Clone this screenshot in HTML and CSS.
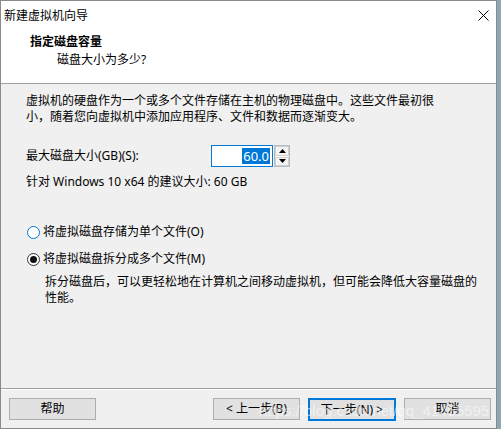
FILE: index.html
```html
<!DOCTYPE html>
<html lang="zh-CN">
<head>
<meta charset="utf-8">
<title>新建虚拟机向导</title>
<link rel="stylesheet" href="styles.css">
</head>
<body>
<div class="window">
  <div class="titlebar">
    <span class="title">新建虚拟机向导</span>
    <svg class="close" width="11" height="11" viewBox="0 0 11 11"><path d="M0.5 0.5 L10.5 10.5 M10.5 0.5 L0.5 10.5" stroke="#000" stroke-width="1" fill="none"/></svg>
  </div>
  <div class="header">
    <div class="h-title">指定磁盘容量</div>
    <div class="h-sub">磁盘大小为多少?</div>
  </div>
  <div class="sep"></div>
  <div class="content">
    <p class="para">虚拟机的硬盘作为一个或多个文件存储在主机的物理磁盘中。这些文件最初很<br>小，随着您向虚拟机中添加应用程序、文件和数据而逐渐变大。</p>
    <div class="size-row">
      <span class="label">最大磁盘大小(GB)(S):</span>
      <div class="spinbox">
        <div class="input"><span class="sel">60.0</span></div>
        <div class="spin">
          <div class="sbtn"><svg width="7" height="4" viewBox="0 0 7 4"><path d="M3.5 0 L7 4 L0 4 Z" fill="#000"/></svg></div>
          <div class="sbtn"><svg width="7" height="4" viewBox="0 0 7 4"><path d="M0 0 L7 0 L3.5 4 Z" fill="#000"/></svg></div>
        </div>
      </div>
    </div>
    <div class="rec">针对 Windows 10 x64 的建议大小: 60 GB</div>
    <div class="radio-row first"><span class="radio off"></span><span>将虚拟磁盘存储为单个文件(O)</span></div>
    <div class="radio-row second"><span class="radio on"></span><span>将虚拟磁盘拆分成多个文件(M)</span></div>
    <p class="desc">拆分磁盘后，可以更轻松地在计算机之间移动虚拟机，但可能会降低大容量磁盘的<br>性能。</p>
  </div>
  <div class="footer">
    <div class="fsep"></div>
    <div class="buttons">
      <div class="btn">帮助</div>
      <div class="btn back">&lt; 上一步(B)</div>
      <div class="btn default">下一步(N) &gt;</div>
      <div class="btn">取消</div>
    </div>
    <div class="watermark">https://blog.csdn.net/qq_41455595</div>
  </div>
</div>
</body>
</html>
```
FILE: styles.css
```css
html, body {
  margin: 0;
  padding: 0;
}
body {
  width: 501px;
  height: 429px;
  background: #8fa7b4;
  overflow: hidden;
  font-family: "Noto Sans", "Noto Sans CJK SC", sans-serif;
  font-size: 12px;
  color: #000;
}
.window {
  width: 495px;
  height: 427px;
  border: 1px solid #8a8a8a;
  background: #f0f0f0;
  display: flex;
  flex-direction: column;
}
.titlebar {
  height: 29px;
  background: #fff;
  display: flex;
  align-items: center;
  padding-left: 3px;
  padding-right: 7px;
}
.title {
  flex: 1;
  line-height: 16px;
}
.close {
  display: block;
  margin-top: -1px;
}
.header {
  height: 53px;
  background: #fff;
  padding-left: 29px;
  display: flex;
  flex-direction: column;
}
.h-title {
  font-weight: bold;
  line-height: 16px;
  margin-top: 4px;
}
.h-sub {
  line-height: 16px;
  margin-top: 2px;
  padding-left: 27px;
}
.sep {
  height: 1px;
  background: #a0a0a0;
}
.content {
  flex: 1;
  padding-left: 25px;
  display: flex;
  flex-direction: column;
}
.para {
  margin: 9px 0 0 0;
  line-height: 16px;
}
.size-row {
  display: flex;
  align-items: center;
  margin-top: 20px;
  height: 22px;
}
.label {
  width: 185px;
  line-height: 16px;
}
.spinbox {
  display: flex;
  height: 22px;
}
.input {
  width: 58px;
  height: 20px;
  border: 1px solid #0078d7;
  background: #fff;
  display: flex;
  align-items: center;
  justify-content: flex-end;
  padding-right: 2px;
}
.sel {
  background: #0078d7;
  color: #fff;
  font-size: 13px;
  line-height: 16px;
  padding: 0 1px;
}
.spin {
  width: 14px;
  height: 20px;
  margin-left: 1px;
  border: 1px solid #b9b9b9;
  background: #fff;
  display: flex;
  flex-direction: column;
  gap: 1px;
}
.sbtn {
  flex: 1;
  background: #f4f4f4;
  border: 1px solid #cfcfcf;
  display: flex;
  align-items: center;
  justify-content: center;
}
.sbtn svg {
  display: block;
}
.rec {
  margin-top: 7px;
  line-height: 16px;
}
.radio-row {
  display: flex;
  align-items: center;
  line-height: 16px;
  gap: 3px;
  padding-left: 1px;
}
.radio-row.first {
  margin-top: 34px;
}
.radio-row.second {
  margin-top: 11px;
}
.radio {
  width: 11px;
  height: 11px;
  border-radius: 50%;
  background: #fff;
  display: flex;
  align-items: center;
  justify-content: center;
}
.radio.off {
  border: 1px solid #0078d7;
}
.radio.on {
  border: 1px solid #333;
}
.radio.on::after {
  content: "";
  width: 7px;
  height: 7px;
  border-radius: 50%;
  background: #111;
}
.desc {
  margin: 7px 0 0 0;
  padding-left: 19px;
  line-height: 16px;
}
.footer {
  position: relative;
  padding-bottom: 7px;
}
.fsep {
  height: 1px;
  background: #a0a0a0;
  border-bottom: 1px solid #fff;
}
.buttons {
  display: flex;
  gap: 8px;
  padding: 8px 5px 0 8px;
}
.btn {
  width: 85px;
  height: 20px;
  border: 1px solid #adadad;
  background: #e1e1e1;
  display: flex;
  align-items: center;
  justify-content: center;
  line-height: 16px;
}
.btn.back {
  margin-left: auto;
}
.btn.default {
  width: 84px;
  height: 19px;
  border: 2px solid #0078d7;
}
.watermark {
  position: absolute;
  left: 258px;
  top: 14px;
  font-family: "Liberation Sans", sans-serif;
  font-size: 15px;
  color: rgba(255, 255, 255, 0.55);
  white-space: nowrap;
  pointer-events: none;
}
```
